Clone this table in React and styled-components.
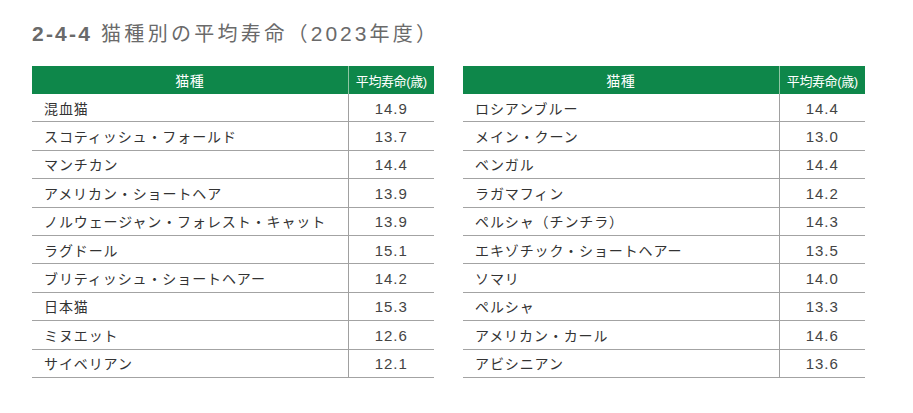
import React from "react";
import styled, { createGlobalStyle } from "styled-components";

const Global = createGlobalStyle`
  html, body { margin: 0; padding: 0; background: #fff; }
  body { font-family: "Liberation Sans", "Noto Sans CJK JP", sans-serif; }
`;

const Page = styled.div`
  width: 913px;
  height: 413px;
  box-sizing: border-box;
  padding: 22px 0 0 32px;
`;

const Title = styled.h1`
  margin: 0;
  font-size: 20px;
  line-height: 24px;
  font-weight: normal;
  color: #6a6a6a;
  letter-spacing: 3.3px;
  white-space: nowrap;
`;

const Num = styled.span`
  font-size: 21px;
  font-weight: bold;
  letter-spacing: 2.2px;
  margin-right: 9px;
`;

const Digits = styled.span`
  font-size: 21px;
  letter-spacing: 3px;
`;

const Tables = styled.div`
  display: flex;
  gap: 29px;
  margin-top: 20px;
`;

const Table = styled.div`
  width: 402px;
  display: grid;
  grid-template-columns: 315.5px 86.5px;
`;

const HeadCell = styled.div`
  height: 28px;
  background: #0e874a;
  color: #fff;
  display: flex;
  align-items: center;
  justify-content: center;
  font-size: ${(p) => (p.$narrow ? "13px" : "14px")};
  letter-spacing: ${(p) => (p.$narrow ? "-0.4px" : "0.5px")};
  white-space: nowrap;
  border-left: ${(p) => (p.$narrow ? "1.5px solid #8fc6a4" : "none")};
  box-sizing: border-box;
`;

const Cell = styled.div`
  height: 28.4px;
  box-sizing: border-box;
  border-bottom: 1.5px solid #a3a3a3;
  display: flex;
  align-items: center;
  white-space: nowrap;
  color: #333;
  ${(p) =>
    p.$value
      ? `
    justify-content: center;
    border-left: 1.5px solid #a0a0a0;
    font-size: 15px;
    letter-spacing: 1px;
    color: #444;
    padding-top: 1px;
  `
      : `
    padding-left: 12px;
    font-size: 14px;
    letter-spacing: 0.9px;
  `}
`;

const left = [
  ["混血猫", "14.9"],
  ["スコティッシュ・フォールド", "13.7"],
  ["マンチカン", "14.4"],
  ["アメリカン・ショートヘア", "13.9"],
  ["ノルウェージャン・フォレスト・キャット", "13.9"],
  ["ラグドール", "15.1"],
  ["ブリティッシュ・ショートヘアー", "14.2"],
  ["日本猫", "15.3"],
  ["ミヌエット", "12.6"],
  ["サイベリアン", "12.1"],
];

const right = [
  ["ロシアンブルー", "14.4"],
  ["メイン・クーン", "13.0"],
  ["ベンガル", "14.4"],
  ["ラガマフィン", "14.2"],
  ["ペルシャ（チンチラ）", "14.3"],
  ["エキゾチック・ショートヘアー", "13.5"],
  ["ソマリ", "14.0"],
  ["ペルシャ", "13.3"],
  ["アメリカン・カール", "14.6"],
  ["アビシニアン", "13.6"],
];

function BreedTable({ rows }) {
  return (
    <Table>
      <HeadCell>猫種</HeadCell>
      <HeadCell $narrow>平均寿命(歳)</HeadCell>
      {rows.map(([name, v]) => (
        <React.Fragment key={name}>
          <Cell>{name}</Cell>
          <Cell $value>{v}</Cell>
        </React.Fragment>
      ))}
    </Table>
  );
}

export default function App() {
  return (
    <Page>
      <Global />
      <Title>
        <Num>2-4-4</Num>猫種別の平均寿命（<Digits>2023</Digits>年度）
      </Title>
      <Tables>
        <BreedTable rows={left} />
        <BreedTable rows={right} />
      </Tables>
    </Page>
  );
}
